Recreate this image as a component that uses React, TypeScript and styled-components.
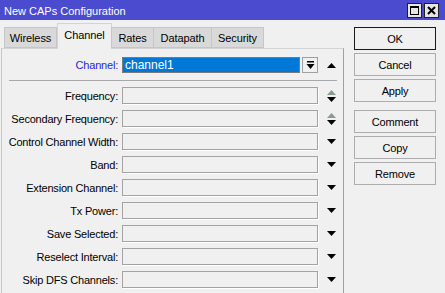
import React from "react";
import styled, { createGlobalStyle } from "styled-components";

const GlobalStyle = createGlobalStyle`
  html, body {
    margin: 0;
    padding: 0;
    background: #f0f0f0;
  }
  body {
    font-family: "Liberation Sans", Tahoma, Arial, sans-serif;
    font-size: 11px;
    color: #000;
  }
`;

const Window = styled.div`
  width: 445px;
  height: 293px;
  background: #f0f0f0;
  overflow: hidden;
  display: flex;
  flex-direction: column;
`;

const TitleBar = styled.div`
  height: 20px;
  background: #4b4bcf;
  display: flex;
  align-items: center;
  justify-content: space-between;
  padding: 0 6px 0 4px;
  flex-shrink: 0;
`;

const Title = styled.div`
  color: #fff;
  font-size: 11px;
  padding-top: 1px;
`;

const TitleButtons = styled.div`
  display: flex;
  gap: 2px;
`;

const WinButton = styled.div`
  width: 13px;
  height: 13px;
  background: #e6e6e6;
  border: 1px solid #202020;
  display: flex;
  align-items: center;
  justify-content: center;
`;

const Body = styled.div`
  display: flex;
  padding-top: 3px;
  flex: 1;
`;

const Main = styled.div`
  width: 343px;
  margin-left: 1px;
  display: flex;
  flex-direction: column;
`;

const Tabs = styled.div`
  display: flex;
  align-items: flex-end;
  height: 25px;
  padding-left: 4px;
  position: relative;
  z-index: 1;
`;

const Tab = styled.div<{ $active?: boolean; $w: number }>`
  width: ${(p) => p.$w}px;
  box-sizing: border-box;
  height: ${(p) => (p.$active ? 26 : 21)}px;
  margin-bottom: ${(p) => (p.$active ? -1 : 0)}px;
  background: ${(p) => (p.$active ? "#f0f0f0" : "#d9d9d9")};
  border: 1px solid ${(p) => (p.$active ? "#d4d4d4" : "#c6c6c6")};
  border-bottom: ${(p) => (p.$active ? "none" : "1px solid #c6c6c6")};
  margin-left: ${(p) => (p.$active ? 0 : -1)}px;
  display: flex;
  align-items: center;
  justify-content: center;
  padding-bottom: ${(p) => (p.$active ? 4 : 0)}px;
  font-size: 11px;
  letter-spacing: -0.1px;
`;

const Panel = styled.div`
  flex: 1;
  border-top: 1px solid #d4d4d4;
  border-left: 1px solid #c8c8c8;
  border-right: 1px solid #a0a0a0;
  padding-top: 8px;
  display: flex;
  flex-direction: column;
`;

const Row = styled.div`
  display: flex;
  align-items: center;
  height: 17px;
  margin-bottom: 6px;
`;

const TopRow = styled(Row)`
  height: 16px;
  margin-bottom: 0;
`;

const Label = styled.div<{ $highlight?: boolean }>`
  width: 116px;
  margin-right: 4px;
  text-align: right;
  white-space: nowrap;
  letter-spacing: -0.2px;
  color: ${(p) => (p.$highlight ? "#1f1fe6" : "#000")};
`;

const Field = styled.div`
  width: 196px;
  height: 17px;
  box-sizing: border-box;
  border: 1px solid #a3a3a3;
  background: #f0f0f0;
  box-shadow: 1px 1px 0 #fff;
`;

const SelectedField = styled.div`
  width: 178px;
  height: 16px;
  box-sizing: border-box;
  border: 1px solid #7a7a7a;
  background: #0078d7;
  color: #fff;
  padding-left: 2px;
  display: flex;
  align-items: center;
  font-size: 12px;
`;

const DropButton = styled.div`
  width: 16px;
  height: 16px;
  margin-left: 2px;
  box-sizing: border-box;
  border: 1px solid #a0a0a0;
  background: #f0f0f0;
  display: flex;
  align-items: center;
  justify-content: center;
`;

const ArrowCell = styled.div`
  width: 24px;
  display: flex;
  flex-direction: column;
  align-items: center;
  justify-content: center;
  gap: 2px;
  padding-left: 1px;
`;

const Separator = styled.div`
  height: 1px;
  background: #a8a8a8;
  margin: 7px 6px 6px 7px;
`;

const Side = styled.div`
  margin-left: 10px;
  padding-top: 4px;
  width: 82px;
  display: flex;
  flex-direction: column;
`;

const Button = styled.div<{ $default?: boolean; $gap: number }>`
  height: 23px;
  box-sizing: border-box;
  margin-bottom: ${(p) => p.$gap}px;
  border: 1px solid ${(p) => (p.$default ? "#1a1a1a" : "#adadad")};
  background: #f0f0f0;
  display: flex;
  align-items: center;
  justify-content: center;
  font-size: 11px;
  letter-spacing: -0.2px;
`;

const Triangle = ({ up, color = "#000" }: { up?: boolean; color?: string }) => (
  <svg width="9" height="5" viewBox="0 0 9 5">
    <polygon points={up ? "0,5 9,5 4.5,0" : "0,0 9,0 4.5,5"} fill={color} />
  </svg>
);

const tabs = [
  { name: "Wireless", w: 53 },
  { name: "Channel", w: 55 },
  { name: "Rates", w: 43 },
  { name: "Datapath", w: 59 },
  { name: "Security", w: 53 },
];

const fields = [
  { label: "Frequency:", spin: true },
  { label: "Secondary Frequency:", spin: true },
  { label: "Control Channel Width:" },
  { label: "Band:" },
  { label: "Extension Channel:" },
  { label: "Tx Power:" },
  { label: "Save Selected:" },
  { label: "Reselect Interval:" },
  { label: "Skip DFS Channels:" },
];

const buttons = [
  { name: "OK", isDefault: true, gap: 3 },
  { name: "Cancel", gap: 3 },
  { name: "Apply", gap: 8 },
  { name: "Comment", gap: 3 },
  { name: "Copy", gap: 3 },
  { name: "Remove", gap: 3 },
];

const App: React.FC = () => {
  return (
    <Window>
      <GlobalStyle />
      <TitleBar>
        <Title>New CAPs Configuration</Title>
        <TitleButtons>
          <WinButton>
            <svg width="9" height="9" viewBox="0 0 9 9">
              <rect x="0.5" y="0.5" width="8" height="8" fill="none" stroke="#000" />
              <rect x="0" y="0" width="9" height="2" fill="#000" />
            </svg>
          </WinButton>
          <WinButton>
            <svg width="9" height="9" viewBox="0 0 9 9">
              <path d="M1 1 L8 8 M8 1 L1 8" stroke="#000" strokeWidth="2" />
            </svg>
          </WinButton>
        </TitleButtons>
      </TitleBar>
      <Body>
        <Main>
          <Tabs>
            {tabs.map((t) => (
              <Tab key={t.name} $w={t.w} $active={t.name === "Channel"}>
                {t.name}
              </Tab>
            ))}
          </Tabs>
          <Panel>
            <TopRow>
              <Label $highlight>Channel:</Label>
              <SelectedField>channel1</SelectedField>
              <DropButton>
                <svg width="9" height="8" viewBox="0 0 9 8">
                  <rect x="1" y="0" width="7" height="1.5" fill="#000" />
                  <polygon points="0.5,3 8.5,3 4.5,8" fill="#000" />
                </svg>
              </DropButton>
              <ArrowCell>
                <Triangle up />
              </ArrowCell>
            </TopRow>
            <Separator />
            {fields.map((f) => (
              <Row key={f.label}>
                <Label>{f.label}</Label>
                <Field />
                <ArrowCell>
                  {f.spin && <Triangle up color="#8e9a90" />}
                  <Triangle />
                </ArrowCell>
              </Row>
            ))}
          </Panel>
        </Main>
        <Side>
          {buttons.map((b) => (
            <Button key={b.name} $default={b.isDefault} $gap={b.gap}>
              {b.name}
            </Button>
          ))}
        </Side>
      </Body>
    </Window>
  );
};

export default App;
